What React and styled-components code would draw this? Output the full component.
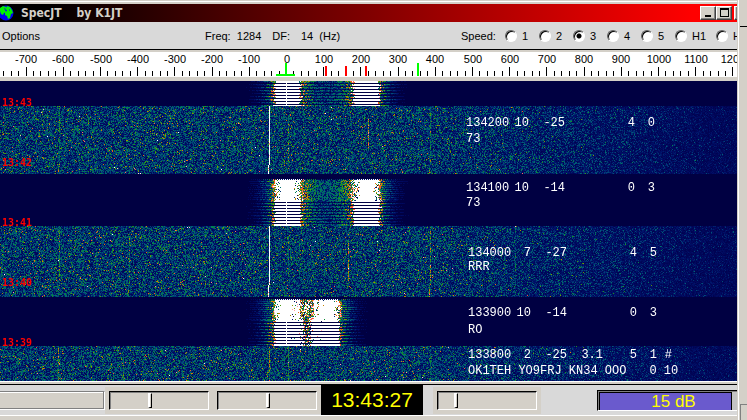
import React, { useLayoutEffect, useRef, useState } from "react";
import styled, { createGlobalStyle } from "styled-components";

const SPEEDS = ["1", "2", "3", "4", "5", "H1", "H2"];
const TIMES = ["13:43", "13:42", "13:41", "13:40", "13:39"];

const DECODES = [
  { time: "134200", sync: "10", db: "-25", dt: "", width: "4", q: "0", text: "73", height: 66, line: 16 },
  { time: "134100", sync: "10", db: "-14", dt: "", width: "0", q: "3", text: "73", height: 65, line: 15 },
  { time: "134000", sync: "7", db: "-27", dt: "", width: "4", q: "5", text: "RRR", height: 59, line: 14, indent: 2 },
  { time: "133900", sync: "10", db: "-14", dt: "", width: "0", q: "3", text: "RO", height: 42, line: 17, indent: 2 },
  {
    time: "133800", sync: "2", db: "-25", dt: "3.1", width: "5", q: "1", flag: "#",
    text: "OK1TEH YO9FRJ KN34 OOO", tail: "0 10", height: 32, line: 16, indent: 2,
  },
];

// frequency scale: 0 Hz sits at 286px, 100 Hz is 37.2px wide
const hzToX = (hz) => 286.5 + hz * 0.372;

const STOPS = [
  [0, 0, 0, 78],
  [0.2, 0, 16, 104],
  [0.38, 0, 62, 120],
  [0.55, 0, 98, 116],
  [0.75, 0, 130, 84],
  [0.95, 24, 146, 24],
  [1.15, 120, 152, 0],
  [1.4, 222, 124, 0],
  [1.65, 255, 70, 40],
  [1.9, 255, 150, 150],
  [2.1, 255, 255, 255],
];

const palette = (v) => {
  if (v >= 2.1) return [255, 255, 255];
  let i = 1;
  while (v > STOPS[i][0]) i++;
  const a = STOPS[i - 1];
  const b = STOPS[i];
  const t = (v - a[0]) / (b[0] - a[0]);
  return [1, 2, 3].map((k) => a[k] + (b[k] - a[k]) * t);
};

// received noise, with faint carriers as [x, from, to, strength]
const NOISE = [
  {
    from: 25, to: 93,
    carriers: [[269, 0, 68, 3], [288, 10, 57, 0.9], [368, 12, 45, 1.5], [430, 0, 68, 0.7], [59, 0, 68, 0.6], [88, 10, 62, 0.4], [47, 8, 32, 0.5], [503, 0, 60, 0.2]],
  },
  {
    from: 145, to: 216,
    carriers: [[269, 0, 71, 3], [288, 10, 50, 0.5], [348, 14, 55, 1.2], [430, 0, 71, 1], [59, 0, 71, 0.7], [129, 10, 71, 0.7], [515, 0, 66, 0.4]],
  },
  {
    from: 265, to: 300,
    carriers: [[269, 0, 35, 1.2], [288, 0, 35, 0.8], [430, 0, 35, 0.7], [58, 0, 35, 1.2], [123, 8, 35, 0.5]],
  },
];

const BURSTS = [
  { from: 0, to: 25, tones: [287, 366], striped: 0 },
  { from: 98, to: 145, tones: [287, 366], striped: 22 },
  { from: 218, to: 265, tones: [287, 326], striped: 21, close: true },
];

const drawWaterfall = (canvas, width, height) => {
  canvas.width = width;
  canvas.height = height;
  const ctx = canvas.getContext("2d");
  const image = ctx.createImageData(width, height);
  let seed = 1284;
  const random = () => {
    seed = (seed * 1664525 + 1013904223) >>> 0;
    return (seed + 1) / 4294967297;
  };
  const put = (x, y, [r, g, b]) => {
    if (x < 0 || x >= width) return;
    const i = (y * width + x) * 4;
    image.data[i] = r;
    image.data[i + 1] = g;
    image.data[i + 2] = b;
    image.data[i + 3] = 255;
  };

  for (let y = 0; y < height; y++) {
    for (let x = 0; x < width; x++) put(x, y, [0, 0, 66]);
  }

  NOISE.forEach(({ from, to, carriers }) => {
    for (let y = from; y < to; y++) {
      for (let x = 0; x < width; x++) {
        const level = x < 400 ? 0.31 : Math.max(0.09, 0.31 - (x - 400) * 0.0007);
        let v = (-Math.log(random()) - Math.log(random())) * level * 0.62;
        carriers.forEach(([cx, a, b, power]) => {
          const row = y - from;
          const drift = row > 58 ? 1 : 0;
          if (row >= a && row < b && x === cx - drift) {
            v += power * (power > 2 ? 0.5 + random() : random());
          }
        });
        if (random() > 0.9985 && x < 450) v += 0.8;
        put(x, y, palette(v));
      }
    }
  });

  // drifting trace in the newest noise period
  for (let y = 32; y < 88; y++) {
    const x = Math.round(173 - (y - 32) * 0.52);
    if (random() > 0.6) put(x + Math.round(random() * 4), y, palette(0.7 + random() * 0.7));
  }

  BURSTS.forEach(({ from, to, tones, striped, close }) => {
    const middle = (tones[0] + tones[1]) / 2;
    for (let y = from; y < to; y++) {
      const row = y - from;
      const lines = row >= striped;
      const gap = lines && row % 3 === 2;
      const weak = lines ? row % 3 !== 0 : row % 2 === 1;
      const reach = 11 + Math.round(random() * 2);
      for (let x = 200; x < 440; x++) {
        const nearest = Math.min(...tones.map((t) => Math.abs(x - t)));
        const inside = x > tones[0] && x < tones[1];
        const d = nearest - reach;
        let v;
        if (close && inside) {
          const off = Math.abs(x - middle);
          v = off < 7 ? random() * 2.8 : random() < 0.22 - off * 0.01 ? random() * 2 : 2.4;
          if (lines && off >= 4 && random() > 0.2) v = 2.4;
        } else if (d <= 0) {
          v = d > -5 && !lines && random() > 0.82 ? random() * 1.6 : 2.4;
        } else if (inside) {
          v = random() * (2.3 * Math.exp(-d / 8) + 0.6) + (d < 4 ? 0.4 : 0.08);
          if (lines && weak) v *= 0.75;
        } else {
          v = 2.7 * Math.exp(-d / 8) * (0.15 + random() * 0.85);
          if (weak && d > 3) v *= 0.35;
        }
        if (gap) v = nearest < 16 || (close && inside) ? 0 : v * 0.3;
        if (lines && x === 286) v = 2.4;
        if (row === 0 && striped) v *= x % 2 ? 0.9 : 0.1;
        if (v > 0.07) put(x, y, palette(v));
      }
    }
  });

  ctx.putImageData(image, 0, 0);
};

const Waterfall = () => {
  const ref = useRef(null);

  useLayoutEffect(() => {
    const canvas = ref.current;
    const draw = () => drawWaterfall(canvas, canvas.parentElement.clientWidth, 300);
    draw();
    window.addEventListener("resize", draw);
    return () => window.removeEventListener("resize", draw);
  }, []);

  return <Spectrum ref={ref} />;
};

const Scale = () => {
  const ticks = [];
  for (let hz = -760; hz <= 2000; hz += 20) ticks.push(hz);
  return (
    <Ruler>
      {ticks.map((hz) => (
        <rect
          key={hz}
          x={Math.floor(hzToX(hz))}
          y={hz % 100 ? 19 : 15}
          width="1"
          height={hz % 100 ? 5 : 9}
        />
      ))}
      {ticks
        .filter((hz) => hz % 100 === 0)
        .map((hz) => (
          <text key={hz} x={Math.round(hzToX(hz))} y="11" textAnchor="middle">
            {hz}
          </text>
        ))}
      <path d="M285 11h2v11h8v2h-19v-2h9zM417 11h2v13h-2z" fill="#00ff00" />
      <path d="M325 14h2v10h-2zM345 14h2v10h-2zM365 14h2v10h-2z" fill="#ff0000" />
    </Ruler>
  );
};

const Globe = () => (
  <svg width="14" height="16" viewBox="0 0 14 16">
    <circle cx="6" cy="8" r="7.5" fill="#0000f0" />
    <path
      d="M0 3l3-2 3 1 1 2-2 1 1 2-2 1-1 2-2-1-1-3zM7 1l3 1 2 3 1 3-2 1-1 4-2 1-1-3-2-1V7l2-1-1-2z"
      fill="#00f000"
    />
    <path d="M4 3l2 1-1 1zM9 4l1 1-1 1z" fill="#0000f0" />
  </svg>
);

const App = () => {
  const [speed, setSpeed] = useState("3");

  return (
    <>
      <GlobalStyle />
      <Desktop>
        <Window>
          <TitleBar>
            <Globe />
            <Title>
              <span>SpecJT</span>
              <span>by K1JT</span>
            </Title>
            <Caption aria-label="Minimize">
              <svg width="12" height="10">
                <path d="M3 7h6v2H3z" />
              </svg>
            </Caption>
            <Caption aria-label="Maximize">
              <svg width="12" height="10">
                <path d="M2 0h9v9H2zM3 2v6h7V2z" fillRule="evenodd" />
              </svg>
            </Caption>
            <Caption aria-label="Close" spaced />
          </TitleBar>

          <Toolbar>
            <MenuButton>Options</MenuButton>
            <Readout>
              <span>Freq:&nbsp; 1284</span>
              <span>DF:</span>
              <span>14&nbsp; (Hz)</span>
            </Readout>
            <Speeds>
              <Legend>Speed:</Legend>
              {SPEEDS.map((s) => (
                <Speed key={s} wide={s.length > 1}>
                  <Radio
                    type="radio"
                    name="speed"
                    checked={speed === s}
                    onChange={() => setSpeed(s)}
                  />
                  {s}
                </Speed>
              ))}
            </Speeds>
          </Toolbar>

          <Scale />

          <Display>
            <Waterfall />
            <Times>
              {TIMES.map((t) => (
                <Time key={t}>{t}</Time>
              ))}
            </Times>
            <Decodes>
              {DECODES.map((d) => (
                <Decode key={d.time} height={d.height} line={d.line} indent={d.indent}>
                  <Fields>
                    <span>{d.time}</span>
                    <Num>{d.sync}</Num>
                    <Num>{d.db}</Num>
                    <Num>{d.dt}</Num>
                    <Num>{d.width}</Num>
                    <Num>{d.q}</Num>
                    <Num>{d.flag}</Num>
                  </Fields>
                  <Message>
                    <span>{d.text}</span>
                    {d.tail && <span>{d.tail}</span>}
                  </Message>
                </Decode>
              ))}
            </Decodes>
          </Display>

          <StatusBar>
            <Status />
            <SliderBox>
              <Slider type="range" aria-label="Brightness" min="0" max="92" defaultValue="37" />
            </SliderBox>
            <SliderBox>
              <Slider type="range" aria-label="Contrast" min="0" max="92" defaultValue="47" />
            </SliderBox>
            <Clock>13:43:27</Clock>
            <SliderBox spaced>
              <Slider type="range" aria-label="Gain" min="0" max="92" defaultValue="16" />
            </SliderBox>
            <Meter>
              <Level>15 dB</Level>
            </Meter>
          </StatusBar>
        </Window>
        <Behind>
          <BehindLine />
          <BehindBox />
        </Behind>
      </Desktop>
    </>
  );
};

export default App;

const GlobalStyle = createGlobalStyle`
  * {
    box-sizing: border-box;
  }
  body {
    margin: 0;
    background: #d4d0c8;
    color: #000;
    font-family: "Liberation Sans", Arial, sans-serif;
    font-size: 11px;
    line-height: 14px;
  }
`;

const Desktop = styled.div`
  display: flex;
  min-height: 100vh;
  overflow: hidden;
`;

const Window = styled.main`
  flex: 1;
  min-width: 0;
  overflow: hidden;
  padding-top: 1px;
`;

const TitleBar = styled.header`
  display: flex;
  align-items: center;
  height: 21px;
  border-top: 1px solid #fff;
  box-shadow: inset 0 2px #d4d0c8;
  padding-top: 2px;
  background: linear-gradient(90deg, #000 0%, #000 6%, #a00000 61%, #ff0000 94%);
`;

const Title = styled.h1`
  display: flex;
  flex: 1;
  gap: 15px;
  margin: 0 0 0 7px;
  color: #d4d0c8;
  font-family: "DejaVu Sans Condensed", "DejaVu Sans", sans-serif;
  font-size: 12px;
  font-weight: bold;
`;

const Caption = styled.button.withConfig({ shouldForwardProp: (p) => p !== "spaced" })`
  flex: none;
  width: ${(props) => (props.spaced ? 3 : 16)}px;
  height: 14px;
  margin-left: ${(props) => (props.spaced ? 2 : 0)}px;
  padding: 0 1px;
  border: 1px solid;
  border-color: #fff #404040 #404040 #fff;
  border-right-width: ${(props) => (props.spaced ? 0 : 1)}px;
  background: #d4d0c8;
  box-shadow: inset -1px -1px #808080;
  svg {
    display: block;
  }
`;

const Toolbar = styled.div`
  display: flex;
  align-items: center;
  height: 28px;
  border-bottom: 1px solid #000;
  background: #d9d9d9;
  white-space: pre;
`;

const MenuButton = styled.button`
  width: 205px;
  padding: 0 0 0 2px;
  border: none;
  background: none;
  font: inherit;
  text-align: left;
`;

const Readout = styled.div`
  display: flex;
  flex: 1;
  gap: 11px;
`;

const Speeds = styled.fieldset`
  display: flex;
  flex: none;
  width: 276px;
  min-width: 0;
  margin: 0;
  padding: 0;
  border: none;
`;

const Legend = styled.span`
  flex: none;
  width: 44px;
`;

const Speed = styled.label.withConfig({ shouldForwardProp: (p) => p !== "wide" })`
  display: flex;
  flex: none;
  align-items: center;
  gap: 5px;
  width: ${(props) => (props.wide ? 41 : 34)}px;
`;

const Radio = styled.input`
  appearance: none;
  flex: none;
  width: 12px;
  height: 12px;
  margin: 0;
  border: 1px solid;
  border-color: #606060 #fff #fff #606060;
  border-radius: 50%;
  background: #fff;
  box-shadow: inset 1px 1px #000;
  &:checked {
    background: radial-gradient(circle, #000 2px, #fff 3px);
  }
`;

const Ruler = styled.svg`
  display: block;
  width: 100%;
  height: 31px;
  border: solid #d4d0c8;
  border-width: 2px 0 4px;
  background: #fff;
  font-size: 11px;
`;

const Display = styled.section`
  position: relative;
  height: 300px;
  overflow: hidden;
`;

const Spectrum = styled.canvas`
  display: block;
`;

const Times = styled.div`
  position: absolute;
  top: 16px;
  left: 2px;
`;

const Time = styled.div`
  height: 60px;
  color: #ff0000;
  font-family: "DejaVu Sans Mono", monospace;
  font-size: 10px;
  font-weight: bold;
  line-height: 11px;
`;

const Decodes = styled.div`
  position: absolute;
  top: 34px;
  left: 466px;
  color: #fff;
  font-family: "Liberation Mono", "Courier New", monospace;
  font-size: 12px;
  white-space: pre;
`;

const Decode = styled.div.withConfig({ shouldForwardProp: (p) => !["height", "line", "indent"].includes(p) })`
  height: ${(props) => props.height}px;
  padding-left: ${(props) => props.indent || 0}px;
  line-height: ${(props) => props.line}px;
`;

const Fields = styled.div`
  display: grid;
  grid-template-columns: 45px 18px 36px 36px 34px 20px 15px;
`;

const Num = styled.span`
  text-align: right;
`;

const Message = styled.div`
  display: flex;
  gap: 23px;
`;

const StatusBar = styled.footer`
  display: flex;
  align-items: center;
  height: 35px;
  border-top: 1px solid #fff;
  border-bottom: 1px solid #fff;
  background: linear-gradient(#d4d0c8 2px, #000 2px, #000 3px, #d9d9d9 3px);
  padding-top: 3px;
`;

const Status = styled.div`
  width: 105px;
  height: 19px;
  border: solid;
  border-width: 1px 1px 1px 0;
  border-color: #808080 #fff #fff #808080;
  background: #d4d0c8;
  box-shadow: inset -1px -1px #808080, inset 0 1px #fff;
`;

const SliderBox = styled.div.withConfig({ shouldForwardProp: (p) => p !== "spaced" })`
  flex: none;
  margin-left: ${(props) => (props.spaced ? 10 : 0)}px;
  padding: 4px;
  background: #d4d0c8;
`;

const Slider = styled.input`
  appearance: none;
  display: block;
  width: 100px;
  height: 19px;
  margin: 0;
  border: 1px solid;
  border-color: #000 #fff #fff #000;
  background: #d4d0c8;
  box-shadow: inset 1px 1px #808080;
  &::-webkit-slider-thumb {
    appearance: none;
    width: 4px;
    height: 15px;
    border: solid;
    border-width: 1px 1px 1px 2px;
    border-color: #fff #000 #000 #fff;
    background: #d4d0c8;
  }
`;

const Clock = styled.time`
  width: 102px;
  height: 30px;
  background: #000;
  color: #ffff00;
  font-size: 21px;
  line-height: 30px;
  text-align: center;
`;

const Meter = styled.div`
  width: 140px;
  height: 21px;
  margin-left: auto;
  padding-right: 5px;
  border: solid;
  border-width: 1px 0 1px 1px;
  border-color: #000 #fff #fff #000;
  background: #c3c3c3;
  box-shadow: inset 1px 1px #808080;
`;

const Level = styled.div`
  height: 18px;
  margin: 1px 0 0 1px;
  padding-left: 16px;
  border: solid #000;
  border-width: 1px 1px 0 1px;
  background: #6a5acd;
  color: #ffff00;
  font-size: 17px;
  line-height: 18px;
  text-align: center;
`;

const Behind = styled.aside`
  display: flex;
  flex: none;
  flex-direction: column;
  justify-content: space-between;
  width: 10px;
  padding: 26px 0 0 3px;
  background: linear-gradient(90deg, #d4d0c8 1px, #fff 1px, #fff 2px, #d4d0c8 2px);
`;

const BehindLine = styled.div`
  height: 1px;
  background: #000;
`;

const BehindBox = styled.div`
  height: 16px;
  border: solid #808080;
  border-width: 1px 0 0 1px;
`;
